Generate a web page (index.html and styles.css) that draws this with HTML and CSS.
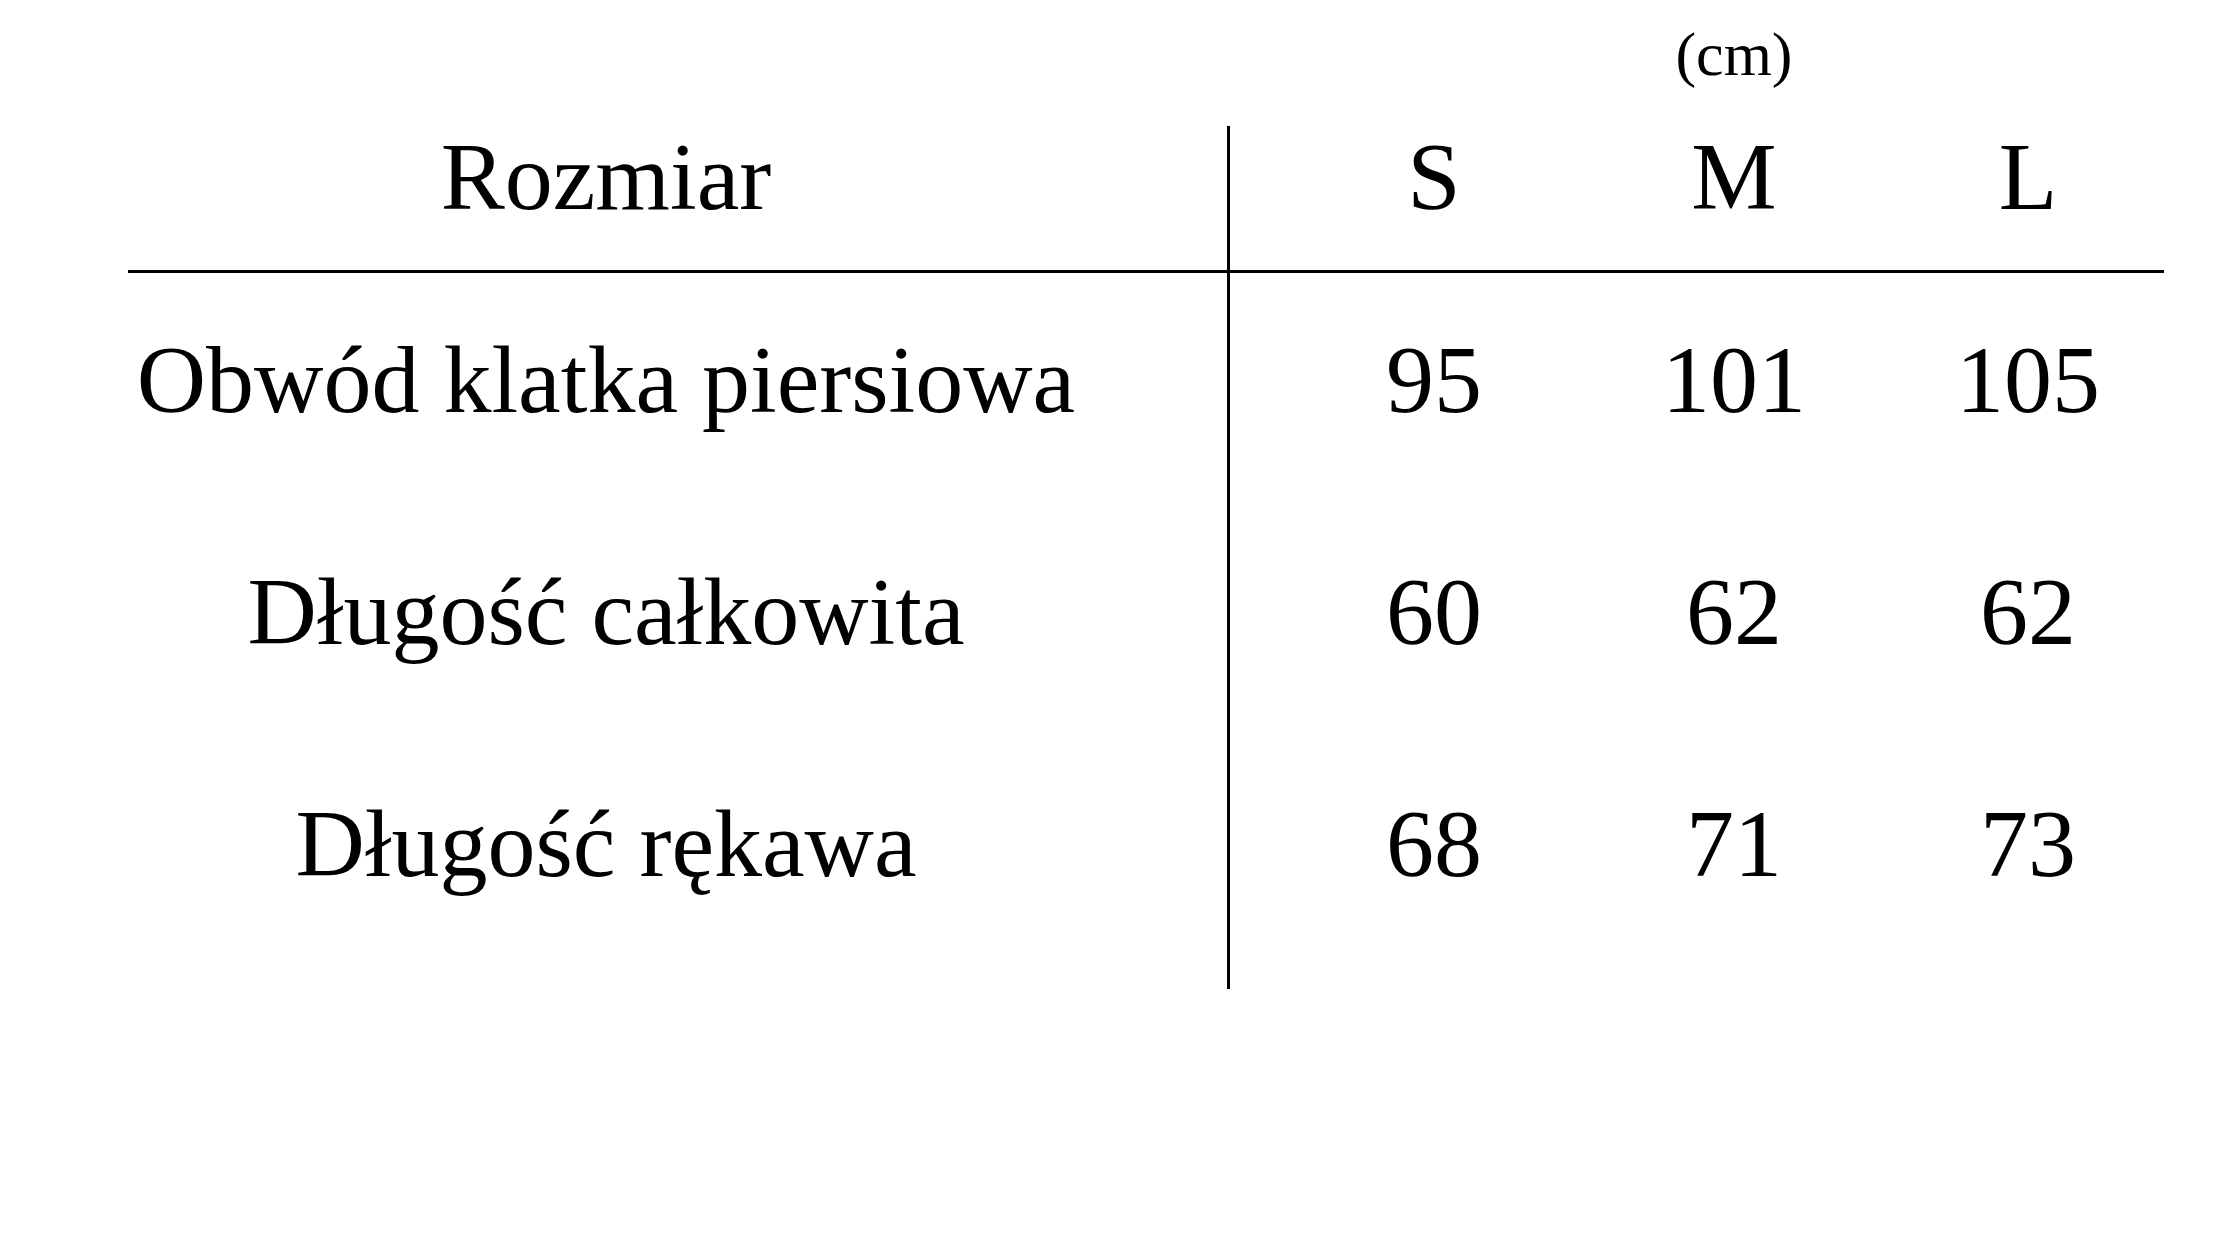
FILE: index.html
```html
<!DOCTYPE html>
<html lang="pl">
<head>
<meta charset="utf-8">
<title>Tabela rozmiarów</title>
<link rel="stylesheet" href="styles.css">
</head>
<body>
<main class="sizes">
  <div class="blank"></div>
  <div class="blank"></div>
  <div class="unit">(cm)</div>
  <div class="blank"></div>

  <div class="head label">Rozmiar</div>
  <div class="head s">S</div>
  <div class="head">M</div>
  <div class="head l">L</div>

  <div class="rule"></div>

  <div class="cell label">Obwód klatka piersiowa</div>
  <div class="cell s">95</div>
  <div class="cell">101</div>
  <div class="cell l">105</div>

  <div class="cell label">Długość całkowita</div>
  <div class="cell s">60</div>
  <div class="cell">62</div>
  <div class="cell l">62</div>

  <div class="cell label">Długość rękawa</div>
  <div class="cell s">68</div>
  <div class="cell">71</div>
  <div class="cell l">73</div>

  <div class="blank"></div>
  <div class="tail s"></div>
</main>
</body>
</html>
```

FILE: styles.css
```css
html, body {
  margin: 0;
  padding: 0;
  background: #ffffff;
}

body {
  width: 2240px;
  height: 1260px;
  overflow: hidden;
  font-family: "Liberation Serif", "Times New Roman", serif;
  color: #000000;
}

.sizes {
  display: grid;
  grid-template-columns: 1099px 357px 300px 280px;
  grid-template-rows: 126px 144px 3px 232px 232px 232px 20px;
  margin-left: 128px;
  width: 2036px;
}

.sizes > div {
  box-sizing: border-box;
  text-align: center;
  white-space: nowrap;
}

.unit {
  font-size: 62px;
  line-height: 68px;
  padding-top: 20px;
}

.head {
  font-size: 96px;
  line-height: 100px;
  padding-top: 1px;
}

.cell {
  font-size: 96px;
  line-height: 106px;
  padding-top: 54px;
}

.label {
  padding-right: 143px;
}

.s {
  border-left: 3px solid #000000;
  padding-left: 54px;
}

.l {
  padding-left: 8px;
}

.rule {
  grid-column: 1 / -1;
  background: #000000;
  height: 3px;
}
```
